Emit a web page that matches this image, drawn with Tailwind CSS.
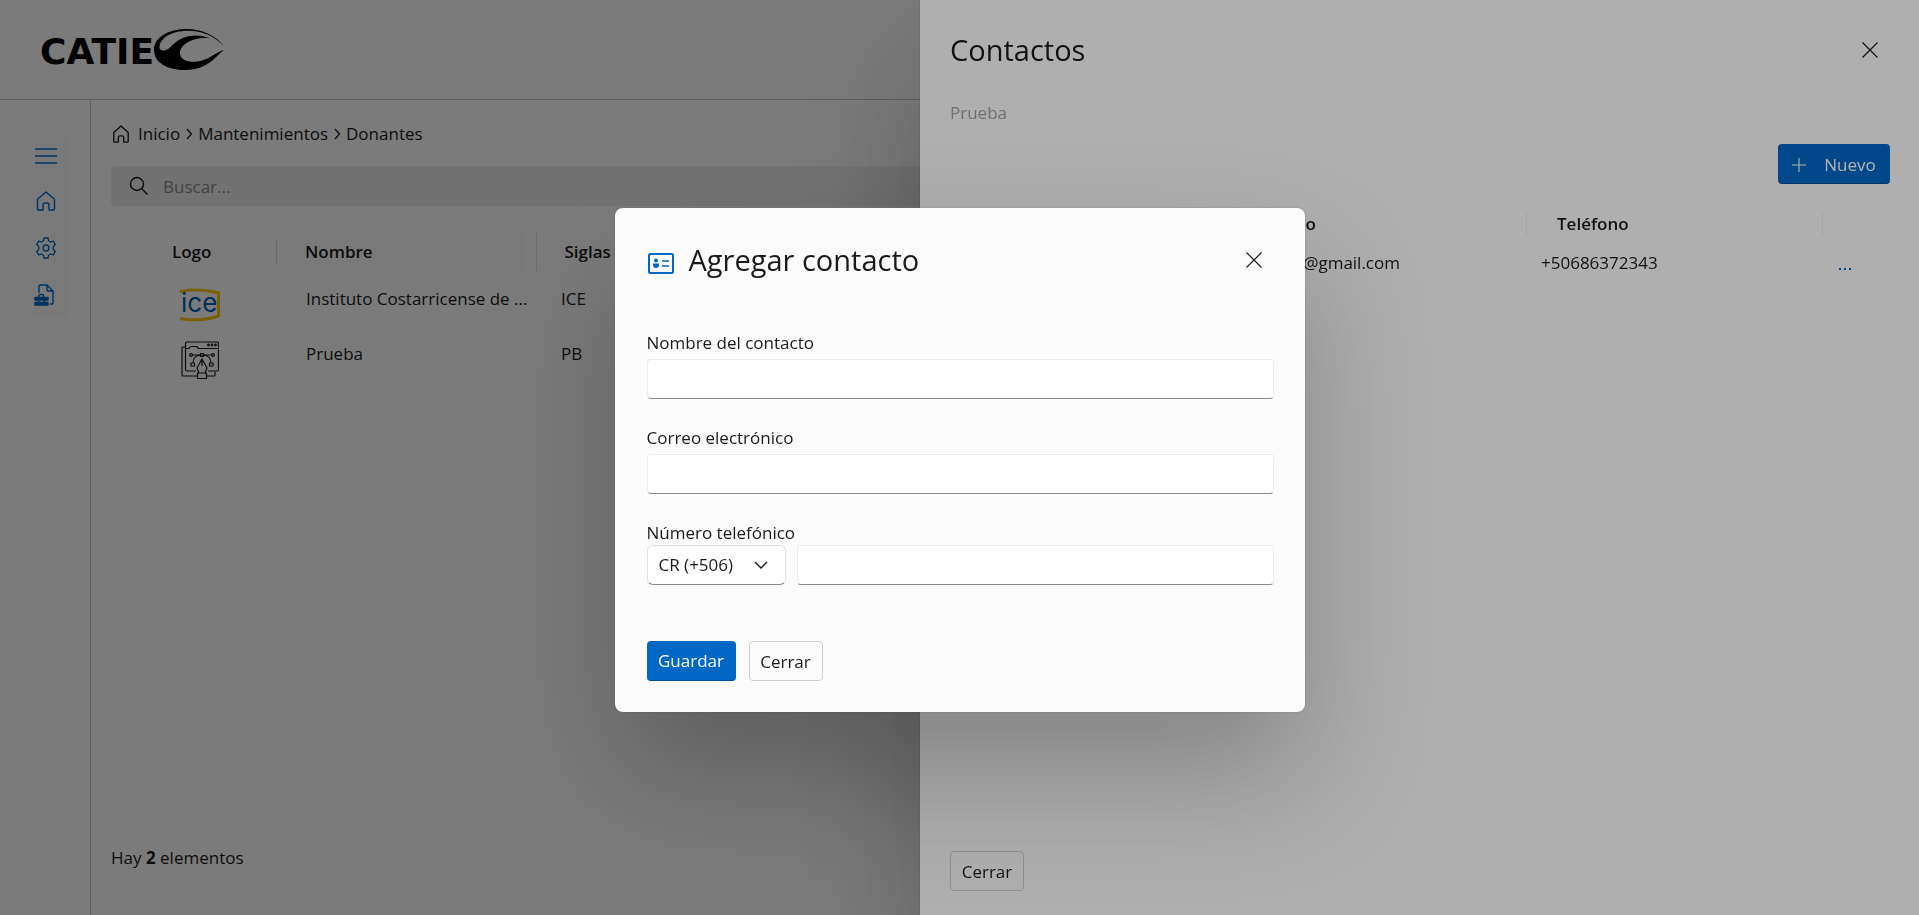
<!DOCTYPE html>
<html lang="es">
<head>
  <meta charset="UTF-8" />
  <meta name="viewport" content="width=device-width, initial-scale=1.0" />
  <title>CATIE - Donantes</title>
  <script src="https://cdn.jsdelivr.net/npm/@tailwindcss/browser@4"></script>
</head>
<body class="bg-[#fbfbfb] font-['Open_Sans',sans-serif] text-[17px] leading-6 text-[#1a1a1a] h-screen overflow-hidden">

<div class="h-screen flex flex-col">
  <!-- Header -->
  <header class="h-[100px] shrink-0 border-b border-[#c4c4c4] flex items-center px-10">
    <a href="#" class="flex items-center text-black" aria-label="CATIE">
      <span class="font-['DejaVu_Sans',sans-serif] font-bold text-[36px] leading-10 pt-1">CATIE</span>
      <svg class="w-[72px] h-[42px]" viewBox="0 0 210 126" preserveAspectRatio="none" fill="currentColor">
        <path fill-rule="evenodd" d="M210 61C188 66 168 123 92 123C40 123 0 102 0 62C0 26 42 0 94 0C142 0 184 22 204 52C178 22 142 5 98 5C48 5 14 30 16 58C20 68 34 66 46 56C76 20 120 10 164 28C116 22 74 46 76 74C78 92 96 99 122 98C160 96 176 70 210 61Z"/>
      </svg>
    </a>
  </header>

  <div class="flex flex-1 min-h-0">
    <!-- Sidebar -->
    <nav class="w-[91px] shrink-0 border-r border-[#c4c4c4] pt-9 pl-0.5 flex flex-col items-center text-[#0067c5]">
      <button class="w-[42px] h-10 bg-[#f7f7f7] flex items-center justify-center" aria-label="Menú">
        <svg class="w-[22px] h-[22px]" viewBox="0 0 22 22" stroke="currentColor" stroke-width="1.5"><path d="M0 4h22M0 11h22M0 18h22"/></svg>
      </button>
      <a href="#" class="w-[42px] h-12 bg-[#f7f7f7] flex items-center justify-center pt-0.5" aria-label="Inicio">
        <svg class="w-5 h-5" viewBox="0 0 20 20" fill="none" stroke="currentColor" stroke-width="1.4" stroke-linejoin="round"><path d="M1.5 8.200L10 1l8.500 7.200V18a1 1 0 0 1-1 1H13v-5a2 2 0 0 0-2-2H9a2 2 0 0 0-2 2v5H2.500a1 1 0 0 1-1-1z"/></svg>
      </a>
      <a href="#" class="w-[42px] h-12 bg-[#f7f7f7] flex items-center justify-center" aria-label="Configuración">
        <svg class="w-[22px] h-[22px]" viewBox="0 0 22 22" fill="none" stroke="currentColor" stroke-width="1.3" stroke-linejoin="round"><path d="M9 1h4l.6 2.800 2 1.200 2.700-.9 2 3.500-2.100 1.900v3l2.100 1.900-2 3.500-2.700-.9-2 1.200L13 21H9l-.6-2.800-2-1.200-2.700.9-2-3.500 2.100-1.900v-3L1.700 7.600l2-3.500 2.700.9 2-1.200z"/><circle cx="11" cy="11" r="3"/></svg>
      </a>
      <a href="#" class="w-[42px] h-[46px] bg-[#f7f7f7] flex items-center justify-center" aria-label="Mantenimientos">
        <svg class="w-6 h-[22px]" viewBox="0 0 24 22" fill="none" stroke="currentColor" stroke-width="1.4" stroke-linejoin="round"><path d="M5 9V2a1 1 0 0 1 1-1h7l6 6v12a1 1 0 0 1-1 1h-2M13 1v5a1 1 0 0 0 1 1h5"/><path d="M5 13v-1.500a1 1 0 0 1 1-1h2.500a1 1 0 0 1 1 1V13"/><path d="M1 13.500h13v2.500H1zM1 18.500h13V21H1z" fill="currentColor"/><path d="M4.500 15.500v3.500M10.500 15.500v3.500"/></svg>
      </a>
    </nav>

    <!-- Main content -->
    <main class="flex-1 min-w-0 flex flex-col pl-5 pt-[22px]">
      <nav class="flex items-center h-6 pl-px" aria-label="Ruta">
        <svg class="w-[18px] h-[18px] mr-2" viewBox="0 0 20 20" fill="none" stroke="currentColor" stroke-width="1.5" stroke-linejoin="round"><path d="M2 8.200L10 1l8 7.200V18a1 1 0 0 1-1 1h-4v-5a2 2 0 0 0-2-2H9a2 2 0 0 0-2 2v5H3a1 1 0 0 1-1-1z"/></svg>
        <a href="#">Inicio</a>
        <svg class="w-[10px] h-3 mx-1" viewBox="0 0 10 12" fill="none" stroke="currentColor" stroke-width="1.3"><path d="M3 1l4.500 5L3 11"/></svg>
        <a href="#">Mantenimientos</a>
        <svg class="w-[10px] h-3 mx-1" viewBox="0 0 10 12" fill="none" stroke="currentColor" stroke-width="1.3"><path d="M3 1l4.500 5L3 11"/></svg>
        <a href="#">Donantes</a>
      </nav>

      <label class="mt-5 h-10 bg-[#e9e9e9] rounded-sm flex items-center pl-[18px] gap-[14px]">
        <svg class="w-5 h-5" viewBox="0 0 20 20" fill="none" stroke="currentColor" stroke-width="1.4"><circle cx="8" cy="8" r="6.5"/><path d="M12.800 12.800L18.500 18.500"/></svg>
        <input type="search" placeholder="Buscar..." aria-label="Buscar" class="flex-1 pt-0.5 bg-transparent outline-none placeholder:text-[#888888]" />
      </label>

      <table class="mt-[26px] w-[640px] table-fixed text-left">
        <thead>
          <tr class="h-10">
            <th class="w-[166px] p-0 font-semibold"><div class="h-6 flex items-center pl-[61px] border-r border-[#d8d8d8]">Logo</div></th>
            <th class="w-[259px] p-0 font-semibold border-r border-[#e2e2e2]"><div class="h-10 flex items-center mx-3 pl-4 bg-[#f7f7f7]">Nombre</div></th>
            <th class="p-0 pl-7 font-semibold">Siglas</th>
          </tr>
        </thead>
        <tbody>
          <tr class="h-[54px]">
            <td class="p-0 pl-[69px]">
              <svg class="w-10 h-8 mt-3 overflow-visible" viewBox="0 0 40 32">
                <path d="M0 2.500Q20-1 38.500 4V27Q20 33 0 29.500" fill="none" stroke="#f5c400" stroke-width="3"/>
                <text x="1" y="23" font-family="Inter, sans-serif" font-size="26" font-weight="400" fill="#0060b0">ice</text>
              </svg>
            </td>
            <td class="p-0 pl-[29px] whitespace-nowrap">Instituto Costarricense de ...</td>
            <td class="p-0 pl-[25px]">ICE</td>
          </tr>
          <tr class="h-[55px]">
            <td class="p-0 pl-[70px]">
              <svg class="w-[38px] h-[38px] mt-3" viewBox="0 0 38 38" fill="none" stroke="#1a1a1a" stroke-width="1.2" stroke-linejoin="round">
                <path d="M4 6H2a1 1 0 0 0-1 1v27a1 1 0 0 0 1 1h14M26 35h7a1 1 0 0 0 1-1v-3"/>
                <path d="M15 30H6a1.500 1.500 0 0 1-1.500-1.500V2.500A1.500 1.500 0 0 1 6 1h30a1.500 1.500 0 0 1 1.500 1.500v26A1.500 1.500 0 0 1 36 30h-9M4.500 7.500H8l1.500-2h6l2 2h20"/>
                <path d="M11 14h8M23 14h8M12 22q0-8 9-8t9 8"/><circle cx="10" cy="14" r="1.4"/><circle cx="32" cy="14" r="1.4"/><path d="M19.500 12.500h3v3h-3zM10 22h3.500v3H10zM28.500 22H32v3h-3.500z"/>
                <path d="M21 18l-5 9 2 5h6l2-5zM21 18v7M16.500 32h9v5.500h-9z"/><circle cx="27.5" cy="4" r=".8"/><circle cx="31" cy="4" r=".8"/><circle cx="34.5" cy="4" r=".8"/>
              </svg>
            </td>
            <td class="p-0 pl-[29px]">Prueba</td>
            <td class="p-0 pl-[25px]">PB</td>
          </tr>
        </tbody>
      </table>

      <p class="mt-auto mb-[45px]">Hay <strong>2</strong> elementos</p>
    </main>
  </div>
</div>

<!-- Contacts panel -->
<div class="fixed inset-0 bg-black/30 flex justify-end">
  <section role="dialog" aria-labelledby="panel-title" class="w-[999px] max-w-full h-full bg-[#fbfbfb] pl-[30px] pr-[29px] pb-6 flex flex-col shadow-[0_0_2px_rgba(0,0,0,0.2),0_64px_128px_rgba(0,0,0,0.24)]">
    <div class="flex items-center justify-between pt-8">
      <h2 id="panel-title" class="text-[29px] leading-9">Contactos</h2>
      <button class="w-10 h-9 flex items-center justify-center" aria-label="Cerrar panel">
        <svg class="w-4 h-4" viewBox="0 0 16 16" stroke="currentColor" stroke-width="1.2"><path d="M.5.5l15 15M15.500.5l-15 15"/></svg>
      </button>
    </div>
    <p class="mt-[33px] text-[#a0a0a0]">Prueba</p>
    <button class="self-end mt-[19px] h-10 w-28 rounded bg-[#0067c5] border-b border-[#004f98] text-white flex items-center justify-center gap-[18px] pt-0.5">
      <svg class="w-[14px] h-[14px]" viewBox="0 0 14 14" stroke="currentColor" stroke-width="1.1"><path d="M7 0v14M0 7h14"/></svg>
      Nuevo
    </button>

    <table class="mt-5 w-full table-fixed text-left">
      <thead>
        <tr class="h-10">
          <th class="p-0 pl-4 font-semibold">Nombre</th>
          <th class="w-[297px] p-0 font-semibold"><div class="h-6 flex items-center pl-[30px] border-r border-[#ececec]">Correo</div></th>
          <th class="w-[296px] p-0 font-semibold"><div class="h-6 flex items-center pl-[30px] border-r border-[#ececec]">Teléfono</div></th>
          <th class="w-[67px] p-0" aria-label="Acciones"></th>
        </tr>
      </thead>
      <tbody>
        <tr class="h-[38px]">
          <td class="p-0">Prueba</td>
          <td class="p-0 pl-4">prueba@gmail.com</td>
          <td class="p-0 pl-[14px]">+50686372343</td>
          <td class="p-0 pl-4"><button class="block text-[#0067c5]" aria-label="Más opciones"><svg class="w-[13px] h-2 mt-3" viewBox="0 0 13 8" fill="currentColor"><path d="M0 3h2v2H0zM5 3h2v2H5zM10 3h2v2h-2z"/></svg></button></td>
        </tr>
      </tbody>
    </table>

    <button class="mt-auto self-start h-10 w-[74px] pt-0.5 rounded border border-[#cfcfcf]">Cerrar</button>
  </section>
</div>

<!-- Add contact dialog -->
<div class="fixed inset-0 bg-black/30 flex items-center justify-center">
  <form role="dialog" aria-labelledby="dialog-title" class="w-[690px] mt-1 bg-[#fbfbfb] rounded-lg pl-8 pr-[31px] pt-[34px] pb-[31px] shadow-[0_0_2px_rgba(0,0,0,0.2),0_64px_128px_rgba(0,0,0,0.24)]">
    <div class="flex items-center justify-between">
      <h2 id="dialog-title" class="flex items-center gap-[15px] text-[29px] leading-9">
        <svg class="w-[27px] h-[21px] mt-2 text-[#0067c5]" viewBox="-1 0 27 21" fill="none" stroke="currentColor" stroke-width="2"><rect x="1" y="1" width="24" height="19" rx="1.5"/><circle cx="8" cy="7.5" r="2" fill="currentColor" stroke="none"/><path d="M5 10.500h6v1.500q0 3-3 3t-3-3z" fill="currentColor" stroke="none"/><path d="M14 8h7M14 13h7" stroke-width="1.6"/></svg>
        Agregar contacto
      </h2>
      <button type="button" class="w-10 h-9 flex items-center justify-center" aria-label="Cerrar diálogo">
        <svg class="w-4 h-4" viewBox="0 0 16 16" stroke="currentColor" stroke-width="1.2"><path d="M.5.5l15 15M15.500.5l-15 15"/></svg>
      </button>
    </div>

    <label for="name" class="block mt-[53px]">Nombre del contacto</label>
    <input id="name" type="text" class="block mt-1 w-full h-10 px-3 rounded bg-white border border-[#ececec] border-b-[#8a8a8a]" />

    <label for="email" class="block mt-[27px]">Correo electrónico</label>
    <input id="email" type="email" class="block mt-1 w-full h-10 px-3 rounded bg-white border border-[#ececec] border-b-[#8a8a8a]" />

    <label for="phone" class="block mt-[27px]">Número telefónico</label>
    <div class="flex gap-[11px]">
      <div class="relative w-[139px]">
        <select aria-label="Código de país" class="appearance-none w-full h-10 px-[11px] rounded-md bg-white border border-[#e0e0e0] border-b-[#8a8a8a]">
          <option>CR (+506)</option>
        </select>
        <svg class="absolute right-[18px] top-4 w-[14px] h-2 pointer-events-none" viewBox="0 0 14 8" fill="none" stroke="currentColor" stroke-width="1.4"><path d="M1 1l6 6 6-6"/></svg>
      </div>
      <input id="phone" type="tel" class="flex-1 min-w-0 h-10 px-3 rounded bg-white border border-[#ececec] border-b-[#8a8a8a]" />
    </div>

    <div class="mt-14 flex gap-[13px]">
      <button type="submit" class="h-10 w-[89px] pt-0.5 rounded bg-[#0067c5] border-b border-[#004f98] text-white">Guardar</button>
      <button type="button" class="h-10 w-[74px] pt-0.5 rounded border border-[#cfcfcf]">Cerrar</button>
    </div>
  </form>
</div>

</body>
</html>
